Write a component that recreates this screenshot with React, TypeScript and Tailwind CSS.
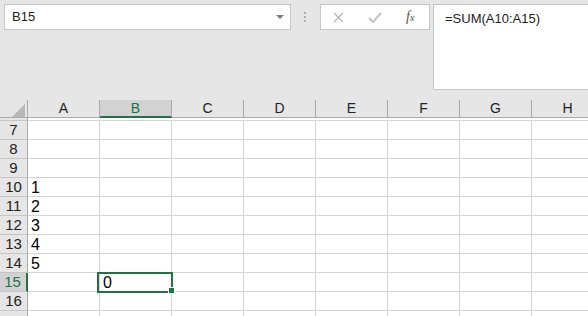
import React from "react";

const cols = ["A", "B", "C", "D", "E", "F", "G", "H"];
const rows = [7, 8, 9, 10, 11, 12, 13, 14, 15, 16, 17];

const values: Record<string, string> = {
  A10: "1",
  A11: "2",
  A12: "3",
  A13: "4",
  A14: "5",
  B15: "0",
};

function FormulaBar() {
  return (
    <div className="flex h-[100px] items-start pl-[4px] pt-[4px]">
      {/* name box */}
      <div className="flex h-[26px] w-[287px] shrink-0 items-center justify-between border border-[#c6c6c6] bg-white pl-[7px] pr-[6px] text-[13px] text-[#222]">
        <span>B15</span>
        <svg width="8" height="5" viewBox="0 0 8 5">
          <path d="M0 0 L8 0 L4 4 Z" fill="#7a7a7a" />
        </svg>
      </div>

      {/* grip dots */}
      <div className="ml-[13px] mt-[8px] flex shrink-0 flex-col gap-[2px]">
        <span className="h-[2px] w-[2px] bg-[#b0b0b0]" />
        <span className="h-[2px] w-[2px] bg-[#b0b0b0]" />
        <span className="h-[2px] w-[2px] bg-[#b0b0b0]" />
      </div>

      {/* cancel / enter / fx */}
      <div className="ml-[14px] flex h-[26px] w-[110px] shrink-0 items-center border border-[#c6c6c6] bg-white">
        <svg className="ml-[12px]" width="11" height="11" viewBox="0 0 11 11">
          <path d="M1 1 L10 10 M10 1 L1 10" stroke="#b4b4b4" strokeWidth="1.2" />
        </svg>
        <svg className="ml-[24px]" width="14" height="11" viewBox="0 0 14 11">
          <path d="M1 6 L5 10 L13 1" stroke="#c2c2c2" strokeWidth="2" fill="none" />
        </svg>
        <span className="ml-[24px] font-['Liberation_Serif',serif] text-[14px] italic leading-none text-[#555]">
          f<span className="text-[10px]">x</span>
        </span>
      </div>

      {/* formula box */}
      <div className="ml-[3px] h-[86px] w-[200px] shrink-0 border border-[#c6c6c6] bg-white pl-[11px] pt-[6px] text-[13px] leading-[16px] text-[#222]">
        =SUM(A10:A15)
      </div>
    </div>
  );
}

function ColumnHeaders() {
  return (
    <div className="flex h-[18px]">
      <div className="relative h-[18px] w-[28px] shrink-0 border-b border-r border-[#ababab]">
        <svg className="absolute left-[12px] top-[4px]" width="13" height="13" viewBox="0 0 13 13">
          <path d="M13 0 L13 13 L0 13 Z" fill="#b7b7b7" />
        </svg>
      </div>
      {cols.map((c) => {
        const sel = c === "B";
        return (
          <div
            key={c}
            className={
              sel
                ? "flex h-[18px] w-[72px] shrink-0 items-center justify-center border-b-2 border-r border-b-[#217346] border-r-[#ababab] bg-[#d2d2d2] text-[14px] text-[#217346]"
                : "flex h-[18px] w-[72px] shrink-0 items-center justify-center border-b border-r border-[#ababab] text-[14px] text-[#222]"
            }
          >
            {c}
          </div>
        );
      })}
    </div>
  );
}

export default function App() {
  return (
    <div className="h-[316px] w-[588px] overflow-hidden bg-[#e6e6e6] font-['Liberation_Sans',Arial,sans-serif]">
      <FormulaBar />

      <div className="w-[620px]">
        <ColumnHeaders />

        {/* gap strip below header */}
        <div className="flex h-[3px]">
          <div className="w-[28px] shrink-0 border-b border-r border-[#c6c6c6] border-r-[#ababab]" />
          <div className="flex-1 border-b border-[#d4d4d4] bg-white" />
        </div>

        {rows.map((r) => {
          const selRow = r === 15;
          return (
            <div key={r} className="flex h-[19px]">
              <div
                className={
                  selRow
                    ? "flex h-[19px] w-[28px] shrink-0 items-end justify-center border-b border-r-2 border-b-[#c6c6c6] border-r-[#217346] bg-[#d2d2d2] pr-[1px] text-[15px] leading-[18px] text-[#217346]"
                    : "flex h-[19px] w-[28px] shrink-0 items-end justify-center border-b border-r border-b-[#c6c6c6] border-r-[#ababab] text-[15px] leading-[18px] text-[#222]"
                }
              >
                {r < 17 ? r : ""}
              </div>
              {cols.map((c) => {
                const id = `${c}${r}`;
                const active = id === "B15";
                return (
                  <div
                    key={id}
                    className={
                      active
                        ? "relative z-10 flex h-[19px] w-[72px] shrink-0 items-end border-b border-r border-[#d4d4d4] bg-white pl-[3px] text-[16px] leading-[17px] text-black"
                        : "flex h-[19px] w-[72px] shrink-0 items-end border-b border-r border-[#d4d4d4] bg-white pl-[3px] text-[16px] leading-[17px] text-black"
                    }
                  >
                    {values[id] ?? ""}
                    {active && (
                      <>
                        <div className="absolute left-[-3px] top-[-1px] h-[21px] w-[76px] border-2 border-[#217346]" />
                        <div className="absolute left-[68px] top-[14px] h-[7px] w-[7px] border border-white bg-[#217346]" />
                      </>
                    )}
                  </div>
                );
              })}
            </div>
          );
        })}
      </div>
    </div>
  );
}
